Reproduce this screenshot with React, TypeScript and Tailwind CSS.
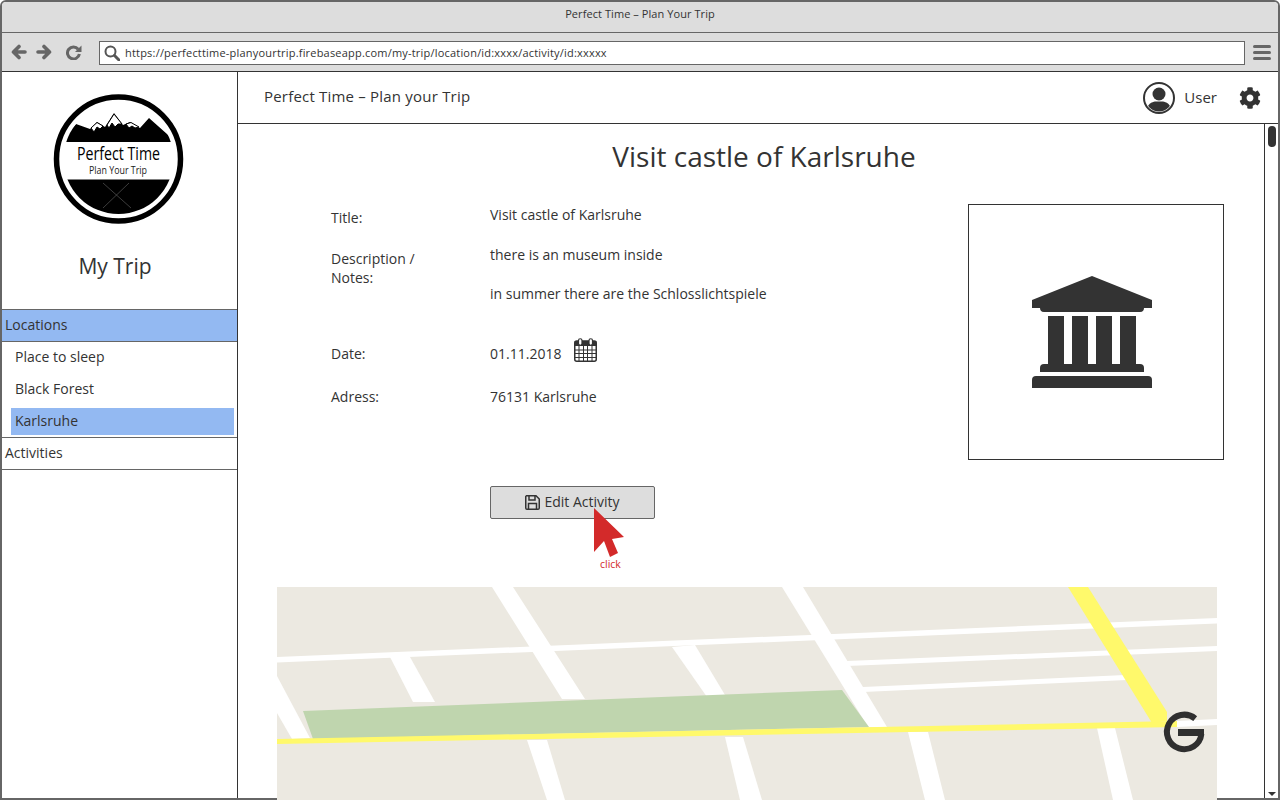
import React from 'react';
import { FaCog } from 'react-icons/fa';

const Logo = () => (
  <svg width="131" height="131" viewBox="53 93 131 131" className="block">
    <defs>
      <clipPath id="logoInner">
        <circle cx="118.5" cy="159" r="55" />
      </clipPath>
    </defs>
    <circle cx="118.5" cy="159" r="62" fill="#fff" stroke="#000" strokeWidth="5.5" />
    <g clipPath="url(#logoInner)">
      <polygon points="60,142 76,124 90,129 97,122 105,127 114,113 123,125 130,122 140,128 149,118 176,142" fill="#000" />
      <polygon points="91,128 97,122.5 103,126 100,129 97,127 94,132" fill="#fff" stroke="#000" strokeWidth="1" />
      <polygon points="107,125 114,114 122,124 118,124 115,127 112,123 109,128" fill="#fff" stroke="#000" strokeWidth="1" />
      <polygon points="126,124 131,122.5 139,127 135,128 132,126 129,128" fill="#fff" stroke="#000" strokeWidth="1" />
      <rect x="60" y="179.5" width="120" height="40" fill="#000" />
    </g>
    <line x1="103" y1="183" x2="131" y2="208" stroke="#666" strokeWidth="0.6" />
    <line x1="129" y1="183" x2="103" y2="208" stroke="#666" strokeWidth="0.6" />
    <text x="77" y="160" fontSize="18" fill="#000" textLength="83" lengthAdjust="spacingAndGlyphs" fontFamily="'Open Sans', sans-serif">Perfect Time</text>
    <text x="89" y="174" fontSize="10" fill="#222" textLength="58" lengthAdjust="spacingAndGlyphs" fontFamily="'Open Sans', sans-serif">Plan Your Trip</text>
  </svg>
);

const ArrowLeft = () => (
  <svg width="16" height="16" viewBox="0 0 16 16" className="block shrink-0" fill="none" stroke="#666" strokeWidth="3.6" strokeLinecap="round" strokeLinejoin="round">
    <path d="M14 8H3M8 2.5L2.5 8L8 13.5" />
  </svg>
);

const ArrowRight = () => (
  <svg width="16" height="16" viewBox="0 0 16 16" className="block shrink-0" fill="none" stroke="#666" strokeWidth="3.6" strokeLinecap="round" strokeLinejoin="round">
    <path d="M2 8H13M8 2.5L13.5 8L8 13.5" />
  </svg>
);

const Reload = () => (
  <svg width="16" height="15" viewBox="0 0 16 15" className="block shrink-0">
    <path d="M12.2 4.2 A6 6 0 1 0 13.4 9" fill="none" stroke="#666" strokeWidth="3" />
    <polygon points="15.5,0.5 15.5,7 9,7" fill="#666" />
  </svg>
);

const SearchIcon = () => (
  <svg width="16" height="16" viewBox="0 0 16 16" className="block shrink-0" fill="none" stroke="#555">
    <circle cx="6.5" cy="6.5" r="5" strokeWidth="2" />
    <path d="M10.5 10.5L15 15" strokeWidth="3" strokeLinecap="round" />
  </svg>
);

const SaveIcon = () => (
  <svg width="15" height="15" viewBox="0 0 15 15" className="block shrink-0" fill="none" stroke="#333" strokeWidth="1.5">
    <path d="M1.5 0.75H11L14.25 4V13C14.25 13.7 13.7 14.25 13 14.25H2C1.3 14.25 0.75 13.7 0.75 13V1.5Z" />
    <path d="M4 1V5H10V1" />
    <path d="M3.5 14V8.5H11.5V14" />
  </svg>
);

const UserIcon = () => (
  <svg width="32" height="32" viewBox="0 0 32 32" className="block">
    <defs>
      <clipPath id="userClip">
        <circle cx="16" cy="16" r="13.5" />
      </clipPath>
    </defs>
    <circle cx="16" cy="16" r="15" fill="#fff" stroke="#333" strokeWidth="2" />
    <g clipPath="url(#userClip)" fill="#333">
      <circle cx="16" cy="12" r="6.5" />
      <path d="M3 32 C3 22 9 20 12 19.5 L20 19.5 C23 20 29 22 29 32 Z" />
    </g>
  </svg>
);

const Calendar = () => (
  <svg width="23" height="24" viewBox="0 0 23 24" className="block">
    <rect x="0.75" y="3" width="21.5" height="20.25" rx="2" fill="#fff" stroke="#333" strokeWidth="1.5" />
    <rect x="0.75" y="3" width="21.5" height="5" fill="#333" />
    <g stroke="#333" strokeWidth="1">
      <path d="M5 8v15M9.5 8v15M13.5 8v15M18 8v15M1 12h21M1 15.5h21M1 19.5h21" />
    </g>
    <rect x="4.5" y="0.75" width="3.5" height="6.5" rx="1.75" fill="#fff" stroke="#333" strokeWidth="1.2" />
    <rect x="15" y="0.75" width="3.5" height="6.5" rx="1.75" fill="#fff" stroke="#333" strokeWidth="1.2" />
  </svg>
);

const Museum = () => (
  <svg width="120" height="112" viewBox="0 0 120 112" className="block mr-[8px]" fill="#333">
    <path d="M60 0 L120 24 V32 H112 C112 34 111 36 108 36 H12 C9 36 8 34 8 32 H0 V24 Z" />
    <rect x="16" y="40" width="16" height="48" />
    <rect x="40" y="40" width="16" height="48" />
    <rect x="64" y="40" width="16" height="48" />
    <rect x="88" y="40" width="16" height="48" />
    <path d="M8 96 V92 Q8 88 12 88 H108 Q112 88 112 92 V96 Z" />
    <path d="M0 112 V104 Q0 100 4 100 H116 Q120 100 120 104 V112 Z" />
  </svg>
);

const Cursor = () => (
  <svg width="32" height="50" viewBox="0 0 32 50" className="block">
    <polygon points="0,0 30,29 18,31 24,45 16,49 10,33 0,44" fill="#d32a2a" />
  </svg>
);

// all coordinates are map-local (page x - 277, y - 587)
const MapView = () => (
  <svg width="940" height="213" viewBox="0 0 940 213" className="block ml-[39px] shrink-0">
    <rect width="940" height="213" fill="#ece9e1" />
    <g fill="#fff">
      <polygon points="0,70 940,31 940,36.5 0,75.5" />
      <polygon points="570,74 940,59 940,64 570,79" />
      <polygon points="586,100 848,88 850,93 586,105" />
      <polygon points="0,89 33,151 15,152 0,126" />
      <polygon points="113,70 133,70 158,115 136,115" />
      <polygon points="215,0 236,0 308,112 285,112" />
      <polygon points="395,60 418,58 448,108 430,110" />
      <polygon points="505,0 526,0 610,140 591,140" />
      <polygon points="250,153 270,153 288,213 270,213" />
      <polygon points="448,150 466,150 485,213 463,213" />
      <polygon points="631,145 651,145 668,213 648,213" />
      <polygon points="820,141 838,141 856,213 836,213" />
      <polygon points="900,134 940,132 940,138 900,140" />
    </g>
    <polygon points="26,124 565,103 592,140 36,152" fill="#bfd5ae" />
    <g fill="#fff96b">
      <polygon points="0,152 900,134 900,140 0,157" />
      <polygon points="791,0 811,0 890,125 890,134 875,136" />
    </g>
    <g>
      <path d="M918.2 131.6 A17.3 17.3 0 1 0 924.4 147" fill="none" stroke="#2f2f2f" strokeWidth="6" />
      <rect x="901" y="142" width="26" height="7" fill="#2f2f2f" />
    </g>
  </svg>
);

const labelCls = 'w-[159px] shrink-0 text-[14px] leading-[19px] text-[#333]';
const valueCls = 'text-[14px] leading-[20px] text-[#333] whitespace-nowrap';

export default function App() {
  return (
    <div
      className="w-[1280px] h-[800px] bg-white border-2 border-[#666] rounded-t-[6px] flex flex-col"
      style={{ fontFamily: "'Open Sans', 'DejaVu Sans', sans-serif" }}
    >
      {/* browser chrome */}
      <div className="h-[31px] shrink-0 bg-[#ddd] border-b border-[#666] rounded-t-[4px] flex items-center justify-center pb-[5px] text-[11px] tracking-[0.07px] text-[#333]">
        Perfect Time – Plan Your Trip
      </div>
      <div className="h-[39px] shrink-0 bg-[#ddd] border-b border-[#333] flex items-center pl-[9px] pr-[7px]">
        <ArrowLeft />
        <div className="ml-[9px]">
          <ArrowRight />
        </div>
        <div className="ml-[14px]">
          <Reload />
        </div>
        <div className="ml-[17px] mt-[2px] w-[1146px] h-[24px] shrink-0 bg-white border border-[#666] flex items-center pl-[4px]">
          <SearchIcon />
          <span className="ml-[5px] pt-[1px] text-[11px] tracking-[0.2px] text-[#333] whitespace-nowrap">
            https://perfecttime-planyourtrip.firebaseapp.com/my-trip/location/id:xxxx/activity/id:xxxxx
          </span>
        </div>
        <div className="ml-[8px] w-[18px] shrink-0 flex flex-col gap-[3px]">
          <div className="h-[3px] rounded-full bg-[#666]" />
          <div className="h-[3px] rounded-full bg-[#666]" />
          <div className="h-[3px] rounded-full bg-[#666]" />
        </div>
      </div>

      <div className="flex flex-1 min-h-0">
        {/* sidebar */}
        <aside className="w-[236px] shrink-0 border-r border-[#333] flex flex-col">
          <div className="pt-[21px] pl-[51px]">
            <Logo />
          </div>
          <div className="mt-[28px] text-center text-[21px] leading-[28px] text-[#333] pr-[9px]">My Trip</div>
          <div className="mt-[29px] h-[33px] shrink-0 bg-[#93b9f2] border-y border-[#666] flex items-center pl-[3px] pb-[2px] text-[14px] text-[#333]">
            Locations
          </div>
          <div>
            <div className="h-[30px] flex items-center pl-[13px] pb-[2px] text-[14px] text-[#333]">Place to sleep</div>
            <div className="h-[32px] flex items-center pl-[13px] text-[14px] text-[#333]">Black Forest</div>
            <div className="h-[27px] mt-[4px] ml-[9px] mr-[3px] bg-[#93b9f2] flex items-center pl-[4px] pb-[2px] text-[14px] text-[#333]">
              Karlsruhe
            </div>
          </div>
          <div className="mt-[2px] h-[33px] shrink-0 border-y border-[#666] flex items-center pl-[3px] pb-[2px] text-[14px] text-[#333]">
            Activities
          </div>
        </aside>

        <div className="flex-1 flex flex-col min-w-0">
          {/* app header */}
          <header className="h-[52px] shrink-0 border-b border-[#333] flex items-center pl-[26px] pr-[17px]">
            <span className="pb-[2px] text-[15px] tracking-[0.2px] text-[#333]">Perfect Time – Plan your Trip</span>
            <div className="ml-auto flex items-center">
              <UserIcon />
              <span className="ml-[9px] text-[15px] text-[#333]">User</span>
              <FaCog size={22} className="ml-[22px] text-[#333]" />
            </div>
          </header>

          <div className="flex flex-1 min-h-0">
            <main className="w-[1026px] shrink-0 flex flex-col">
              <h1 className="mt-[13px] shrink-0 pl-[26px] text-center text-[28px] leading-[38px] font-normal text-[#333]">
                Visit castle of Karlsruhe
              </h1>

              <div className="mt-[29px] shrink-0 flex justify-between pl-[93px] pr-[40px]">
                <div>
                  <div className="flex h-[41px]">
                    <div className={`${labelCls} pt-[4px]`}>Title:</div>
                    <div className={`${valueCls} pt-[1px]`}>Visit castle of Karlsruhe</div>
                  </div>
                  <div className="flex h-[59px]">
                    <div className={`${labelCls} pt-[4px]`}>
                      Description /<br />Notes:
                    </div>
                    <div className={valueCls}>
                      <p>there is an museum inside</p>
                      <p className="mt-[19px]">in summer there are the Schlosslichtspiele</p>
                    </div>
                  </div>
                  <div className="flex mt-[40px] h-[20px] items-center">
                    <div className={`${labelCls} pb-[2px]`}>Date:</div>
                    <div className={`${valueCls} flex items-center`}>
                      01.11.2018
                      <span className="ml-[13px] -mt-[8px]">
                        <Calendar />
                      </span>
                    </div>
                  </div>
                  <div className="flex mt-[23px] h-[20px] items-center">
                    <div className={`${labelCls} pb-[2px]`}>Adress:</div>
                    <div className={valueCls}>76131 Karlsruhe</div>
                  </div>
                </div>
                <div className="w-[256px] h-[256px] shrink-0 border border-[#333] flex items-center justify-center">
                  <Museum />
                </div>
              </div>

              <div className="relative mt-[26px] ml-[252px] w-[165px] h-[33px] shrink-0 bg-[#ddd] border border-[#666] rounded-[2px] flex items-center justify-center gap-[4px] text-[14px] text-[#333]">
                <SaveIcon />
                <span className="pb-[2px]">Edit Activity</span>
                <div className="absolute left-[103px] top-[21px]">
                  <Cursor />
                </div>
                <span className="absolute left-[109px] top-[70px] text-[10.5px] leading-[14px] text-[#d32a2a]">click</span>
              </div>

              <div className="mt-[68px] shrink-0">
                <MapView />
              </div>
            </main>

            {/* scrollbar */}
            <div className="flex-1 border-l border-[#333] flex flex-col items-center pt-[2px] pb-[2px] justify-between">
              <div className="w-[8px] h-[21px] rounded-full bg-[#333]" />
              <div className="w-0 h-0 border-x-[4px] border-x-transparent border-t-[4px] border-t-[#333]" />
            </div>
          </div>
        </div>
      </div>
    </div>
  );
}
